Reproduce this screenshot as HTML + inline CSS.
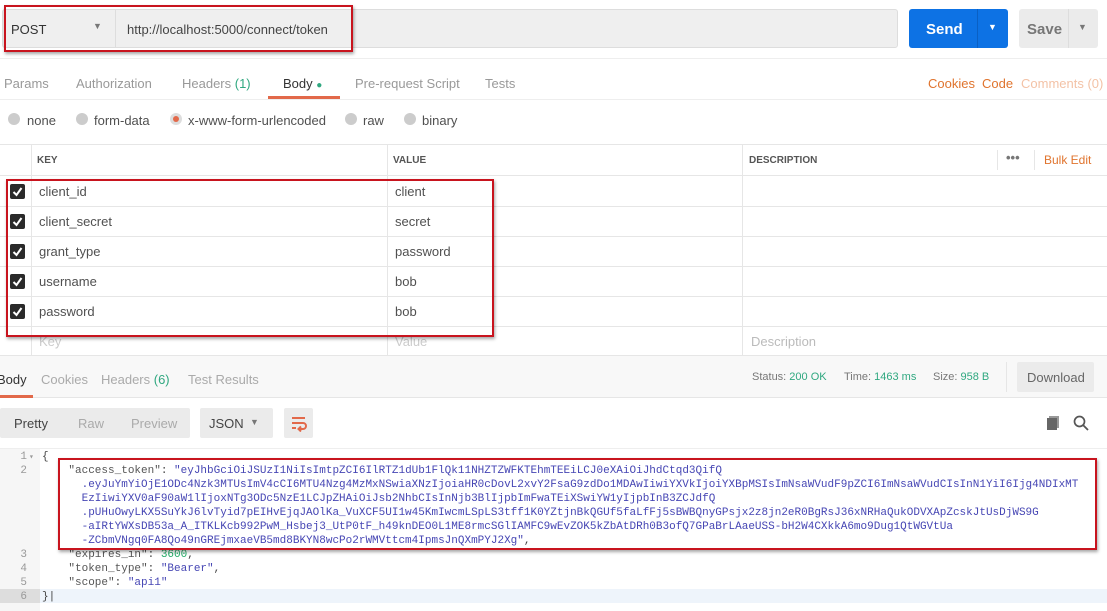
<!DOCTYPE html>
<html><head><meta charset="utf-8"><style>
*{margin:0;padding:0;box-sizing:border-box}
body{width:1107px;height:611px;overflow:hidden;background:#fff;font-family:"Liberation Sans",sans-serif;font-size:13px;color:#505050;position:relative}
.a{position:absolute;white-space:nowrap}
.red{position:absolute;border:2px solid #c8141e;box-shadow:1px 2px 3px rgba(0,0,0,.35)}
.mono{font-family:"Liberation Mono",monospace;font-size:11px}
.hl{position:absolute;left:0;width:1107px;height:1px;background:#e6e6e6}
.vl{position:absolute;width:1px;background:#e6e6e6}
.cb{position:absolute;left:10px;width:15px;height:15px;background:#2a2a2a;border-radius:2px}
.cb svg{position:absolute;left:2px;top:2px}
.s{color:#4646b4}.k{color:#555}
</style></head><body>
<div class="a" style="left:2px;top:9px;width:896px;height:39px;background:#efefef;border:1px solid #ddd;border-radius:3px"></div>
<div class="a" style="left:115px;top:10px;width:1px;height:37px;background:#ddd"></div>
<div class="a" style="left:11px;top:22px;color:#333">POST</div>
<div class="a" style="left:93px;top:21px;font-size:9px;color:#777">▼</div>
<div class="a" style="left:127px;top:22px;color:#444">http://localhost:5000/connect/token</div>
<div class="red" style="left:4px;top:5px;width:349px;height:47px"></div>
<div class="a" style="left:909px;top:9px;width:99px;height:39px;background:#0d72e4;border-radius:3px"></div>
<div class="a" style="left:977px;top:9px;width:1px;height:39px;background:#0a60c4"></div>
<div class="a" style="left:926px;top:21px;color:#fff;font-weight:bold;font-size:15px">Send</div>
<div class="a" style="left:988px;top:22px;color:#fff;font-size:9px">▼</div>
<div class="a" style="left:1019px;top:9px;width:79px;height:39px;background:#ebebeb;border-radius:3px"></div>
<div class="a" style="left:1068px;top:9px;width:1px;height:39px;background:#ddd"></div>
<div class="a" style="left:1027px;top:21px;color:#777;font-weight:bold;font-size:15px">Save</div>
<div class="a" style="left:1078px;top:22px;color:#777;font-size:9px">▼</div>
<div class="hl" style="top:58px;background:#eee"></div>
<div class="a" style="top:76px;left:4px;color:#999">Params</div>
<div class="a" style="top:76px;left:76px;color:#999">Authorization</div>
<div class="a" style="top:76px;left:182px;color:#999">Headers <span style="color:#30a880">(1)</span></div>
<div class="a" style="top:76px;left:283px;color:#333">Body <span style="color:#30a880;font-size:10px">●</span></div>
<div class="a" style="top:76px;left:355px;color:#999">Pre-request Script</div>
<div class="a" style="top:76px;left:485px;color:#999">Tests</div>
<div class="a" style="top:76px;left:928px;color:#e0742e">Cookies</div>
<div class="a" style="top:76px;left:982px;color:#e0742e">Code</div>
<div class="a" style="top:76px;left:1021px;color:#f3c2a6">Comments (0)</div>
<div class="a" style="left:268px;top:96px;width:72px;height:3px;background:#e2694a"></div>
<div class="hl" style="top:99px;background:#eee"></div>
<div class="a" style="top:113px;left:8px;width:12px;height:12px;border-radius:6px;background:#ccc"></div><div class="a" style="top:113px;left:27px">none</div>
<div class="a" style="top:113px;left:76px;width:12px;height:12px;border-radius:6px;background:#ccc"></div><div class="a" style="top:113px;left:94px">form-data</div>
<div class="a" style="top:113px;left:170px;width:12px;height:12px;border-radius:6px;background:#ddd"><div style="margin:3px;width:6px;height:6px;border-radius:3px;background:#e2694a"></div></div><div class="a" style="top:113px;left:188px">x-www-form-urlencoded</div>
<div class="a" style="top:113px;left:345px;width:12px;height:12px;border-radius:6px;background:#ccc"></div><div class="a" style="top:113px;left:363px">raw</div>
<div class="a" style="top:113px;left:404px;width:12px;height:12px;border-radius:6px;background:#ccc"></div><div class="a" style="top:113px;left:422px">binary</div>
<div class="hl" style="top:144px"></div>
<div class="hl" style="top:175px"></div>
<div class="hl" style="top:206px"></div><div class="hl" style="top:236px"></div><div class="hl" style="top:266px"></div><div class="hl" style="top:296px"></div><div class="hl" style="top:326px"></div><div class="hl" style="top:355px"></div>
<div class="vl" style="left:31px;top:144px;height:211px"></div>
<div class="vl" style="left:387px;top:144px;height:211px"></div>
<div class="vl" style="left:742px;top:144px;height:211px"></div>
<div class="a" style="top:155px;left:37px;font-size:10px;font-weight:bold;color:#555">KEY</div>
<div class="a" style="top:155px;left:393px;font-size:10px;font-weight:bold;color:#555">VALUE</div>
<div class="a" style="top:155px;left:749px;font-size:10px;font-weight:bold;color:#555">DESCRIPTION</div>
<div class="vl" style="left:997px;top:150px;height:20px"></div><div class="vl" style="left:1034px;top:150px;height:20px"></div>
<div class="a" style="top:150px;left:1006px;color:#777;font-weight:bold">•••</div>
<div class="a" style="top:153px;left:1044px;color:#e0742e;font-size:12px">Bulk Edit</div>
<div class="cb" style="top:184px"><svg width="11" height="11"><path d="M1.5 6 L4.5 9 L9.5 2" stroke="#fff" stroke-width="2" fill="none"/></svg></div>
<div class="cb" style="top:214px"><svg width="11" height="11"><path d="M1.5 6 L4.5 9 L9.5 2" stroke="#fff" stroke-width="2" fill="none"/></svg></div>
<div class="cb" style="top:244px"><svg width="11" height="11"><path d="M1.5 6 L4.5 9 L9.5 2" stroke="#fff" stroke-width="2" fill="none"/></svg></div>
<div class="cb" style="top:274px"><svg width="11" height="11"><path d="M1.5 6 L4.5 9 L9.5 2" stroke="#fff" stroke-width="2" fill="none"/></svg></div>
<div class="cb" style="top:304px"><svg width="11" height="11"><path d="M1.5 6 L4.5 9 L9.5 2" stroke="#fff" stroke-width="2" fill="none"/></svg></div>
<div class="a" style="top:184px;left:39px">client_id</div><div class="a" style="top:184px;left:395px">client</div>
<div class="a" style="top:214px;left:39px">client_secret</div><div class="a" style="top:214px;left:395px">secret</div>
<div class="a" style="top:244px;left:39px">grant_type</div><div class="a" style="top:244px;left:395px">password</div>
<div class="a" style="top:274px;left:39px">username</div><div class="a" style="top:274px;left:395px">bob</div>
<div class="a" style="top:304px;left:39px">password</div><div class="a" style="top:304px;left:395px">bob</div>
<div class="a" style="top:334px;left:39px;color:#ccc">Key</div><div class="a" style="top:334px;left:395px;color:#ccc">Value</div><div class="a" style="top:334px;left:751px;color:#bbb">Description</div>
<div class="red" style="left:6px;top:179px;width:488px;height:158px"></div>
<div class="a" style="left:0;top:356px;width:1107px;height:41px;background:#f8f8f8"></div>
<div class="hl" style="top:397px"></div>
<div class="a" style="top:372px;left:-3px;color:#333">Body</div>
<div class="a" style="top:372px;left:41px;color:#aaa">Cookies</div>
<div class="a" style="top:372px;left:101px;color:#aaa">Headers <span style="color:#30a880">(6)</span></div>
<div class="a" style="top:372px;left:188px;color:#aaa">Test Results</div>
<div class="a" style="left:0;top:395px;width:33px;height:3px;background:#e2694a"></div>
<div class="a" style="top:371px;left:752px;font-size:11px;color:#777">Status: <span style="color:#30a880">200 OK</span></div>
<div class="a" style="top:371px;left:844px;font-size:11px;color:#777">Time: <span style="color:#30a880">1463 ms</span></div>
<div class="a" style="top:371px;left:933px;font-size:11px;color:#777">Size: <span style="color:#30a880">958 B</span></div>
<div class="vl" style="left:1006px;top:362px;height:30px"></div>
<div class="a" style="left:1017px;top:362px;width:77px;height:30px;background:#ebebeb;border-radius:2px"></div>
<div class="a" style="top:370px;left:1027px;color:#666">Download</div>
<div class="a" style="left:0;top:408px;width:190px;height:30px;background:#ebebeb;border-radius:2px"></div>
<div class="a" style="top:416px;left:14px;color:#444">Pretty</div>
<div class="a" style="top:416px;left:78px;color:#aaa">Raw</div>
<div class="a" style="top:416px;left:131px;color:#aaa">Preview</div>
<div class="a" style="left:200px;top:408px;width:73px;height:30px;background:#ebebeb;border-radius:2px"></div>
<div class="a" style="top:416px;left:209px;color:#444">JSON</div>
<div class="a" style="top:417px;left:250px;color:#777;font-size:9px">▼</div>
<div class="a" style="left:284px;top:408px;width:29px;height:30px;background:#ebebeb;border-radius:2px"></div>
<svg class="a" style="left:290px;top:414px" width="18" height="18"><path d="M2 4H15M2 9H13a3 3 0 0 1 0 6H9M11 12.5 L8.5 15 L11 17.5M2 14H6" stroke="#e2694a" stroke-width="2" fill="none"/></svg>
<svg class="a" style="left:1046px;top:415px" width="16" height="16"><rect x="3" y="1" width="10" height="12" fill="#999"/><rect x="1" y="3" width="10" height="12" fill="#666"/></svg>
<svg class="a" style="left:1073px;top:415px" width="16" height="16"><circle cx="6.5" cy="6.5" r="5" stroke="#555" stroke-width="1.7" fill="none"/><path d="M10 10L15 15" stroke="#555" stroke-width="1.8"/></svg>
<div class="hl" style="top:448px;background:#eee"></div>
<div class="a" style="left:0;top:449px;width:40px;height:162px;background:#f6f6f6"></div>
<div class="a" style="left:0;top:589px;width:1107px;height:14px;background:#eef4fb"></div>
<div class="a" style="left:0;top:589px;width:40px;height:14px;background:#ddd"></div>
<div class="a mono" style="left:0;top:450px;width:27px;text-align:right;line-height:14px;color:#999">1<br>2<br><br><br><br><br><br>3<br>4<br>5<br>6</div>
<div class="a mono" style="left:29px;top:451px;color:#999;font-size:8px;line-height:14px">▾</div>
<div class="a mono" style="left:42px;top:450px;line-height:14px;color:#444">{<br>
&nbsp;&nbsp;&nbsp;&nbsp;<span class="k">"access_token"</span>: <span class="s">"eyJhbGciOiJSUzI1NiIsImtpZCI6IlRTZ1dUb1FlQk11NHZTZWFKTEhmTEEiLCJ0eXAiOiJhdCtqd3QifQ</span><br>
<span class="s">&nbsp;&nbsp;&nbsp;&nbsp;&nbsp;&nbsp;.eyJuYmYiOjE1ODc4Nzk3MTUsImV4cCI6MTU4Nzg4MzMxNSwiaXNzIjoiaHR0cDovL2xvY2FsaG9zdDo1MDAwIiwiYXVkIjoiYXBpMSIsImNsaWVudF9pZCI6ImNsaWVudCIsInN1YiI6Ijg4NDIxMT</span><br>
<span class="s">&nbsp;&nbsp;&nbsp;&nbsp;&nbsp;&nbsp;EzIiwiYXV0aF90aW1lIjoxNTg3ODc5NzE1LCJpZHAiOiJsb2NhbCIsInNjb3BlIjpbImFwaTEiXSwiYW1yIjpbInB3ZCJdfQ</span><br>
<span class="s">&nbsp;&nbsp;&nbsp;&nbsp;&nbsp;&nbsp;.pUHuOwyLKX5SuYkJ6lvTyid7pEIHvEjqJAOlKa_VuXCF5UI1w45KmIwcmLSpLS3tff1K0YZtjnBkQGUf5faLfFj5sBWBQnyGPsjx2z8jn2eR0BgRsJ36xNRHaQukODVXApZcskJtUsDjWS9G</span><br>
<span class="s">&nbsp;&nbsp;&nbsp;&nbsp;&nbsp;&nbsp;-aIRtYWXsDB53a_A_ITKLKcb992PwM_Hsbej3_UtP0tF_h49knDEO0L1ME8rmcSGlIAMFC9wEvZOK5kZbAtDRh0B3ofQ7GPaBrLAaeUSS-bH2W4CXkkA6mo9Dug1QtWGVtUa</span><br>
<span class="s">&nbsp;&nbsp;&nbsp;&nbsp;&nbsp;&nbsp;-ZCbmVNgq0FA8Qo49nGREjmxaeVB5md8BKYN8wcPo2rWMVttcm4IpmsJnQXmPYJ2Xg"</span>,<br>
&nbsp;&nbsp;&nbsp;&nbsp;<span class="k">"expires_in"</span>: <span style="color:#2a6">3600</span>,<br>
&nbsp;&nbsp;&nbsp;&nbsp;<span class="k">"token_type"</span>: <span class="s">"Bearer"</span>,<br>
&nbsp;&nbsp;&nbsp;&nbsp;<span class="k">"scope"</span>: <span class="s">"api1"</span><br>
}|</div>
<div class="red" style="left:58px;top:458px;width:1039px;height:92px"></div>
</body></html>
